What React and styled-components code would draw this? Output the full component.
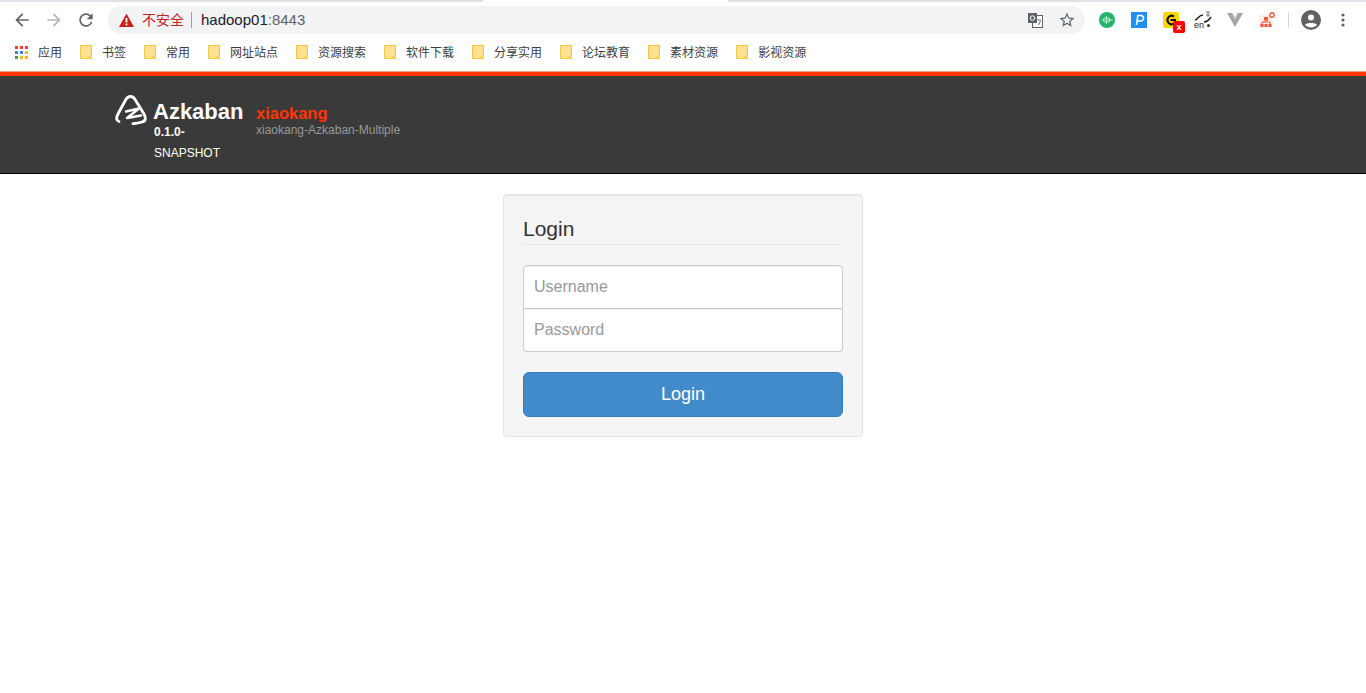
import React from 'react';
import styled, { createGlobalStyle } from 'styled-components';

const GlobalStyle = createGlobalStyle`
    html, body {
        margin: 0;
        padding: 0;
        background: #fff;
        font-family: "Liberation Sans", Arial, sans-serif;
    }
    * {
        box-sizing: border-box;
    }
`;

const Browser = styled.div`
    height: 71px;
    background: #fff;
    display: flex;
    flex-direction: column;
`;

const TabStrip = styled.div`
    height: 2px;
    display: flex;
    background: #dee1e6;
    padding-left: 483px;
`;

const ActiveTab = styled.div`
    width: 245px;
    background: #fff;
`;

const Toolbar = styled.div`
    height: 34px;
    margin-top: 2px;
    display: flex;
    align-items: center;
    padding: 0 0 2px 6px;
`;

const NavButton = styled.div`
    width: 32px;
    height: 28px;
    display: flex;
    align-items: center;
    justify-content: center;
    color: ${(p) => (p.$disabled ? '#b4b6b9' : '#5f6368')};
`;

const Omnibox = styled.div`
    width: 977px;
    height: 28px;
    margin-left: 6px;
    border-radius: 14px;
    background: #f1f3f4;
    display: flex;
    align-items: center;
    padding: 0 2px 0 11px;
`;

const Warning = styled.svg`
    width: 15px;
    height: 14px;
    flex: none;
`;

const NotSecure = styled.span`
    margin: 0 0 2px 8px;
    font-family: "Noto Sans CJK SC", sans-serif;
    font-size: 14px;
    color: #c5221f;
`;

const Divider = styled.span`
    width: 1px;
    height: 16px;
    margin: 0 9px 0 7px;
    background: #9aa0a6;
`;

const Url = styled.span`
    font-size: 15px;
    color: #5f6368;
    flex: 1;
    margin-bottom: 2px;

    b {
        font-weight: 400;
        color: #202124;
    }
`;

const OmniIcon = styled.div`
    width: 32px;
    height: 24px;
    display: flex;
    align-items: center;
    justify-content: center;
    color: #5f6368;
`;

const Extensions = styled.div`
    display: flex;
    align-items: center;
    margin-left: 6px;
`;

const ExtSlot = styled.div`
    width: 32px;
    height: 24px;
    display: flex;
    align-items: center;
    justify-content: center;
    position: relative;
`;

const ToolbarRule = styled.span`
    width: 1px;
    height: 16px;
    margin: 0 6px 0 5px;
    background: #d5d7da;
`;

const Badge = styled.span`
    position: absolute;
    left: 18px;
    top: 13px;
    width: 12px;
    height: 12px;
    border-radius: 2px;
    background: #f00;
    color: #fff;
    font-size: 9px;
    font-weight: 700;
    line-height: 12px;
    text-align: center;
`;

const Bookmarks = styled.div`
    height: 33px;
    display: flex;
    align-items: flex-start;
    padding: 4px 0 0 15px;
    flex: none;
`;

const AppsItem = styled.div`
    display: flex;
    align-items: center;
    height: 20px;
    width: 65px;
`;

const BookmarkItem = styled.div`
    display: flex;
    align-items: center;
    height: 20px;
    margin-right: 18px;
`;

const BookmarkLabel = styled.span`
    font-family: "Noto Sans CJK SC", sans-serif;
    font-size: 12px;
    line-height: 20px;
    color: #3c4043;
    margin-left: 10px;
`;

const AccentBar = styled.div`
    height: 5px;
    background: #ff3601;
    border-top: 1px solid #e8a08c;
`;

const Header = styled.header`
    height: 98px;
    background: #3a3a3a;
    border-bottom: 1px solid #000;
    padding: 15px 0 0 115px;
    display: flex;
    align-items: flex-start;
`;

const Brand = styled.div`
    display: flex;
    width: 141px;
    flex: none;
`;

const LogoMark = styled.svg`
    width: 32px;
    height: 32px;
    margin-top: 2px;
    flex: none;
`;

const BrandText = styled.div`
    margin-left: 6px;
    width: 94px;
    color: #fff;
`;

const BrandName = styled.div`
    font-size: 22px;
    font-weight: 700;
    line-height: 42px;
    height: 31px;
`;

const Version = styled.div`
    font-size: 12px;
    line-height: 21px;
    width: 70px;
    margin-left: 1px;

    b {
        display: block;
        font-weight: 700;
    }
`;

const Cluster = styled.div`
    padding-top: 12px;
`;

const ClusterName = styled.div`
    font-size: 16.5px;
    font-weight: 700;
    line-height: 20px;
    color: #ff3601;
`;

const ClusterDesc = styled.div`
    font-size: 12px;
    line-height: 12px;
    margin-top: 1px;
    color: #999;
`;

const Main = styled.main`
    display: flex;
    justify-content: center;
    padding-top: 20px;
`;

const LoginCard = styled.form`
    width: 360px;
    height: 243px;
    background: #f5f5f5;
    border: 1px solid #e3e3e3;
    border-radius: 4px;
    padding: 19px;
    box-shadow: inset 0 1px 1px rgba(0, 0, 0, 0.05);
`;

const Legend = styled.div`
    font-size: 21px;
    line-height: 30px;
    height: 31px;
    color: #333;
    border-bottom: 1px solid #e5e5e5;
    margin-bottom: 20px;
`;

const Field = styled.input`
    display: block;
    width: 100%;
    height: ${(p) => (p.$first ? 44 : 43)}px;
    padding: 10px;
    font-family: inherit;
    font-size: 16px;
    color: #555;
    background: #fff;
    border: 1px solid #ccc;
    border-top-width: ${(p) => (p.$first ? 1 : 0)}px;
    border-radius: ${(p) => (p.$first ? '4px 4px 0 0' : '0 0 4px 4px')};
    box-shadow: inset 0 1px 1px rgba(0, 0, 0, 0.075);
    outline: none;

    &::placeholder {
        color: #999;
        opacity: 1;
    }
`;

const SubmitButton = styled.button`
    display: block;
    width: 100%;
    height: 45px;
    margin-top: 20px;
    font-family: inherit;
    font-size: 18px;
    color: #fff;
    background: #428bca;
    border: 1px solid #357ebd;
    border-radius: 6px;
`;

const Glyph = ({ d, size = 20 }) => (
    <svg width={size} height={size} viewBox="0 0 24 24" fill="currentColor">
        <path d={d} />
    </svg>
);

const Folder = () => (
    <svg width="12" height="14" viewBox="0 0 12 14">
        <path d="M.5 .5h11v13H.5z" fill="#fee28f" stroke="#f0c846" />
        <path d="M9 13.500v-2.500h2.500" fill="none" stroke="#f0c846" />
    </svg>
);

const AppsGrid = () => {
    const colors = ['#ea4335', '#ea4335', '#ea4335', '#4285f4', '#4285f4', '#fbbc05', '#34a853', '#fbbc05', '#fbbc05'];
    return (
        <svg width="13" height="13" viewBox="0 0 13 13">
            {colors.map((c, i) => (
                <rect key={i} x={(i % 3) * 5} y={Math.floor(i / 3) * 5} width="3" height="3" fill={c} />
            ))}
        </svg>
    );
};

const bookmarks = ['书签', '常用', '网址站点', '资源搜索', '软件下载', '分享实用', '论坛教育', '素材资源', '影视资源'];

const App = () => (
    <>
        <GlobalStyle />
        <Browser>
            <TabStrip>
                <ActiveTab />
            </TabStrip>
            <Toolbar>
                <NavButton>
                    <Glyph d="M20 11H7.830l5.590-5.590L12 4l-8 8 8 8 1.410-1.410L7.830 13H20v-2z" />
                </NavButton>
                <NavButton $disabled>
                    <Glyph d="M12 4l-1.410 1.410L16.170 11H4v2h12.170l-5.580 5.590L12 20l8-8z" />
                </NavButton>
                <NavButton>
                    <Glyph d="M17.650 6.350A7.958 7.958 0 0 0 12 4c-4.420 0-7.990 3.580-7.990 8s3.570 8 7.990 8c3.730 0 6.840-2.550 7.730-6h-2.080A5.990 5.990 0 0 1 12 18c-3.310 0-6-2.690-6-6s2.690-6 6-6c1.660 0 3.140.690 4.220 1.780L13 11h7V4l-2.350 2.350z" />
                </NavButton>
                <Omnibox>
                    <Warning viewBox="0 0 15 14">
                        <path d="M7.500 .5L15 14H0z" fill="#c5221f" />
                        <rect x="6.600" y="5" width="1.800" height="4.600" fill="#fff" />
                        <rect x="6.600" y="10.600" width="1.800" height="1.800" fill="#fff" />
                    </Warning>
                    <NotSecure>不安全</NotSecure>
                    <Divider />
                    <Url>
                        <b>hadoop01</b>:8443
                    </Url>
                    <OmniIcon>
                        <svg width="16" height="16" viewBox="0 0 16 16">
                            <rect x="5.500" y="3.500" width="10" height="12" fill="#fff" stroke="#5f6368" />
                            <rect x="1" y="1" width="9" height="10" fill="#5f6368" />
                            <circle cx="5.500" cy="6" r="2.200" fill="none" stroke="#fff" />
                            <path d="M10.500 8h3.500M11.500 13l2-4" stroke="#5f6368" fill="none" />
                        </svg>
                    </OmniIcon>
                    <OmniIcon>
                        <Glyph
                            size={18}
                            d="M22 9.240l-7.190-.620L12 2 9.190 8.630 2 9.240l5.460 4.730L5.820 21 12 17.270 18.180 21l-1.630-7.030L22 9.240zM12 15.400l-3.760 2.270 1-4.280-3.320-2.880 4.380-.380L12 6.100l1.710 4.040 4.380.380-3.320 2.880 1 4.280L12 15.400z"
                        />
                    </OmniIcon>
                </Omnibox>
                <Extensions>
                    <ExtSlot>
                        <svg width="16" height="16" viewBox="0 0 16 16">
                            <circle cx="8" cy="8" r="8" fill="#23b36b" />
                            <path d="M2.500 8h1M4.500 6.500v3M6 5v6M7.500 4v8M9 5v6M10.500 6v4M12 7v2M13 8h1" stroke="#bdeccf" strokeWidth="1" />
                        </svg>
                    </ExtSlot>
                    <ExtSlot>
                        <svg width="16" height="16" viewBox="0 0 16 16">
                            <rect width="16" height="16" fill="#2090f5" />
                            <path d="M5.500 13L6.800 3.500h3a2.500 2.500 0 0 1 0 5.500H6" fill="none" stroke="#fff" strokeWidth="1.600" />
                        </svg>
                    </ExtSlot>
                    <ExtSlot>
                        <svg width="16" height="16" viewBox="0 0 16 16">
                            <rect width="16" height="16" rx="2" fill="#ffd600" />
                            <path d="M11 4.500A4.200 4.200 0 1 0 11 11.500M7.500 8H12v3" fill="none" stroke="#111" strokeWidth="2" />
                        </svg>
                        <Badge>x</Badge>
                    </ExtSlot>
                    <ExtSlot>
                        <svg width="20" height="18" viewBox="0 0 20 18">
                            <path d="M2 9c3-1 4-5 8-5M11 11c3 0 5-2 7-5" fill="none" stroke="#222" strokeWidth="1.600" />
                            <path d="M13 1h4M15 1v5M13 4h4" stroke="#777" fill="none" />
                            <circle cx="15.500" cy="14.500" r="1.500" fill="#333" />
                            <text x="1" y="17" fontSize="9" fontFamily="Liberation Sans" fill="#222">en</text>
                        </svg>
                    </ExtSlot>
                    <ExtSlot>
                        <svg width="16" height="14" viewBox="0 0 16 14">
                            <path d="M0 0h5l3 6 3-6h5L8 14z" fill="#a5a5a5" />
                            <path d="M5 0l3 6 3-6h-1L8 3.500 6 0z" fill="#d0d0d0" />
                        </svg>
                    </ExtSlot>
                    <ExtSlot>
                        <svg width="16" height="16" viewBox="0 0 16 16">
                            <rect x="0" y="3" width="13" height="13" rx="2" fill="#fdeee9" />
                            <circle cx="13" cy="3" r="2.200" fill="#fff" stroke="#f0553a" strokeWidth="1.400" />
                            <rect x="5" y="5" width="4" height="3.500" fill="#f0553a" />
                            <path d="M7 8v2M3 12v-2h8v2" fill="none" stroke="#f0553a" />
                            <rect x="1.500" y="12" width="3" height="3" fill="#f0553a" />
                            <rect x="5.500" y="12" width="3" height="3" fill="#f0553a" />
                            <rect x="9.500" y="12" width="3" height="3" fill="#f0553a" />
                        </svg>
                    </ExtSlot>
                    <ToolbarRule />
                    <ExtSlot>
                        <svg width="20" height="20" viewBox="0 0 20 20">
                            <circle cx="10" cy="10" r="10" fill="#5f6368" />
                            <circle cx="10" cy="7.500" r="3" fill="#fff" />
                            <path d="M4 15c1.500-2.600 10.500-2.600 12 0-3 3.200-9 3.200-12 0z" fill="#fff" />
                        </svg>
                    </ExtSlot>
                    <ExtSlot>
                        <svg width="4" height="14" viewBox="0 0 4 14" fill="#5f6368">
                            <circle cx="2" cy="2" r="1.600" />
                            <circle cx="2" cy="7" r="1.600" />
                            <circle cx="2" cy="12" r="1.600" />
                        </svg>
                    </ExtSlot>
                </Extensions>
            </Toolbar>
            <Bookmarks>
                <AppsItem>
                    <AppsGrid />
                    <BookmarkLabel>应用</BookmarkLabel>
                </AppsItem>
                {bookmarks.map((label) => (
                    <BookmarkItem key={label}>
                        <Folder />
                        <BookmarkLabel>{label}</BookmarkLabel>
                    </BookmarkItem>
                ))}
            </Bookmarks>
        </Browser>
        <AccentBar />
        <Header>
            <Brand>
                <LogoMark viewBox="0 0 32 32">
                    <path
                        d="M4 28.500C1 27.500 1 25 3 21L10 8C13 2 18 2 21 8L29 21C31 25 31 28 27 29C24 30 21 30.500 18 30.700"
                        fill="none"
                        stroke="#fff"
                        strokeWidth="2.800"
                        strokeLinecap="round"
                    />
                    <path d="M11 18.500L24 15.500L12 25L26 22.500" fill="none" stroke="#fff" strokeWidth="2.400" strokeLinecap="round" strokeLinejoin="round" />
                </LogoMark>
                <BrandText>
                    <BrandName>Azkaban</BrandName>
                    <Version>
                        <b>0.1.0-</b>
                        SNAPSHOT
                    </Version>
                </BrandText>
            </Brand>
            <Cluster>
                <ClusterName>xiaokang</ClusterName>
                <ClusterDesc>xiaokang-Azkaban-Multiple</ClusterDesc>
            </Cluster>
        </Header>
        <Main>
            <LoginCard onSubmit={(e) => e.preventDefault()}>
                <Legend>Login</Legend>
                <Field $first placeholder="Username" />
                <Field placeholder="Password" type="password" />
                <SubmitButton type="button">Login</SubmitButton>
            </LoginCard>
        </Main>
    </>
);

export default App;
